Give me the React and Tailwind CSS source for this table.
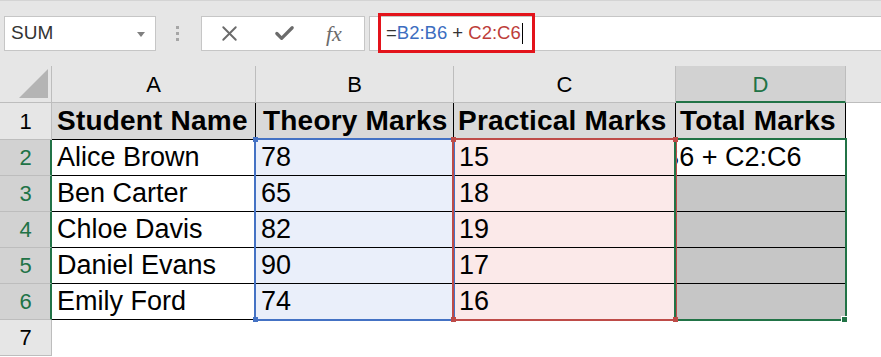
import { X, Check } from 'lucide-react'

const ROWS = [
  ['Alice Brown', '78', '15'],
  ['Ben Carter', '65', '18'],
  ['Chloe Davis', '82', '19'],
  ['Daniel Evans', '90', '17'],
  ['Emily Ford', '74', '16'],
]

const COLS = [
  { key: 'A', w: 'w-[204px]' },
  { key: 'B', w: 'w-[198px]' },
  { key: 'C', w: 'w-[222px]' },
  { key: 'D', w: 'w-[170px]' },
]

function Toolbar() {
  return (
    <div className="relative flex h-[66px] items-start gap-0 border-t border-[#d4d4d4] bg-[#e6e6e6] pt-[15px]">
      {/* name box */}
      <div className="ml-[4px] flex h-[35px] w-[152px] items-center justify-between border border-[#c6c6c6] bg-white pl-[6px] pr-[10px]">
        <span className="text-[19px] text-[#333]">SUM</span>
        <svg width="8" height="5" viewBox="0 0 8 5" className="mt-[1px]">
          <path d="M0 0h8L4 5z" fill="#808080" />
        </svg>
      </div>

      {/* grip dots */}
      <div className="ml-[18px] flex h-[35px] w-[6px] flex-col items-center justify-center gap-[3px]">
        <span className="h-[3px] w-[3px] bg-[#a6a6a6]" />
        <span className="h-[3px] w-[3px] bg-[#a6a6a6]" />
        <span className="h-[3px] w-[3px] bg-[#a6a6a6]" />
      </div>

      {/* cancel / enter / fx */}
      <div className="ml-[21px] flex h-[35px] w-[164px] items-center border border-[#c6c6c6] bg-white text-[#6b6b6b]">
        <X size={25} strokeWidth={1.8} className="ml-[15px]" />
        <Check size={23} strokeWidth={3.4} className="ml-[31px]" />
        <span
          className="ml-[30px] text-[22px] italic text-[#6b6b6b]"
          style={{ fontFamily: '"Liberation Serif", serif' }}
        >
          fx
        </span>
      </div>

      {/* formula bar */}
      <div className="relative ml-[4px] flex h-[35px] flex-1 items-center border border-r-0 border-[#c6c6c6] bg-white pl-[16px]">
        <span className="text-[18.5px] leading-none text-[#333]">
          =<span className="text-[#3c6dc0]">B2:B6</span> + <span className="text-[#bd3d3a]">C2:C6</span>
        </span>
        <span className="ml-[1px] h-[21px] w-px bg-black" />
        {/* annotation highlight */}
        <div className="pointer-events-none absolute left-[8px] top-[-4px] h-[40px] w-[157px] border-[3px] border-[#e3131b]" />
      </div>
    </div>
  )
}

function HeaderRow() {
  return (
    <div className="flex h-[37px]">
      <div className="flex w-[52px] items-end justify-end border-r border-b border-[#bdbdbd] bg-[#e6e6e6] pb-[4px] pr-[3px]">
        <svg width="29" height="29" viewBox="0 0 29 29">
          <path d="M29 0V29H0z" fill="#b4b4b4" />
        </svg>
      </div>
      {COLS.map((c) =>
        c.key === 'D' ? (
          <div
            key={c.key}
            className={`${c.w} flex items-center justify-center border-r border-b-2 border-r-[#bdbdbd] border-b-[#217346] bg-[#d2d2d2] pt-[1px] text-[22px] text-[#217346]`}
          >
            {c.key}
          </div>
        ) : (
          <div
            key={c.key}
            className={`${c.w} flex items-center justify-center border-r border-b border-[#bdbdbd] bg-[#e6e6e6] pt-[1px] text-[22px] text-black`}
          >
            {c.key}
          </div>
        )
      )}
      <div className="flex-1 border-b border-[#bdbdbd] bg-[#e6e6e6]" />
    </div>
  )
}

function RowHead({ n, active, h }) {
  return (
    <div
      className={`flex w-[52px] items-center justify-center border-b border-[#bdbdbd] text-[22px] ${h} ${
        active
          ? 'border-r-2 border-r-[#217346] bg-[#d2d2d2] pl-[1px] text-[#217346]'
          : 'border-r border-r-[#bdbdbd] bg-[#e6e6e6] text-black'
      }`}
    >
      {n}
    </div>
  )
}

export default function App() {
  return (
    <div
      className="h-[357px] w-[881px] overflow-hidden bg-white"
      style={{ fontFamily: '"Liberation Sans", Arial, sans-serif' }}
    >
      <Toolbar />

      <div className="relative">
        <HeaderRow />

        {/* row 1 – titles */}
        <div className="flex h-[37px]">
          <RowHead n={1} h="h-[37px]" />
          <div className="flex w-[204px] items-center border-r border-b border-r-black border-b-black bg-[#d9d9d9] pl-[5px] text-[28px] font-bold leading-none tracking-[0.2px] text-black">
            Student Name
          </div>
          <div className="flex w-[198px] items-center border-r border-b border-black bg-[#d9d9d9] pl-[7px] text-[28px] font-bold leading-none tracking-[0.2px] text-black">
            Theory Marks
          </div>
          <div className="flex w-[222px] items-center border-r border-b border-black bg-[#d9d9d9] pl-[4px] text-[28px] font-bold leading-none tracking-[0.2px] text-black">
            Practical Marks
          </div>
          <div className="flex w-[170px] items-center border-r border-b border-black bg-[#d9d9d9] pl-[4px] text-[28px] font-bold leading-none tracking-[0.2px] text-black">
            Total Marks
          </div>
          <div className="flex-1" />
        </div>

        {/* rows 2-6 */}
        {ROWS.map(([name, theory, practical], i) => (
          <div key={name} className="flex h-[36px]">
            <RowHead n={i + 2} active h="h-[36px]" />
            <div className="flex w-[204px] items-center border-r border-b border-black bg-white pl-[5px] text-[27px] leading-none text-black">
              {name}
            </div>
            <div className="flex w-[198px] items-center border-r border-b border-black bg-[#eaeffa] pl-[5px] text-[27px] leading-none text-black">
              {theory}
            </div>
            <div className="flex w-[222px] items-center border-r border-b border-black bg-[#fbe9e9] pl-[5px] text-[27px] leading-none text-black">
              {practical}
            </div>
            {i === 0 ? (
              <div className="flex w-[170px] items-center overflow-hidden whitespace-nowrap border-r border-b border-black bg-white text-[27px] leading-none text-black">
                <span className="ml-[-71px]">=B2:B6 + C2:C6</span>
              </div>
            ) : (
              <div className="w-[170px] border-r border-b border-black bg-[#c6c6c6]" />
            )}
            <div className="flex-1" />
          </div>
        ))}

        {/* row 7 */}
        <div className="flex h-[36px]">
          <RowHead n={7} h="h-[36px]" />
          <div className="flex-1" />
        </div>

        {/* range highlights */}
        <div className="pointer-events-none absolute left-[254px] top-[72px] h-[183px] w-[201px] border-2 border-[#4472c4]" />
        <div className="pointer-events-none absolute left-[452px] top-[72px] h-[183px] w-[225px] border-2 border-[#be4b48]" />
        <div className="pointer-events-none absolute left-[674px] top-[72px] h-[183px] w-[173px] border-2 border-[#217346]" />

        <span className="absolute left-[253px] top-[71px] h-[5px] w-[5px] bg-[#4472c4]" />
        <span className="absolute left-[253px] top-[251px] h-[5px] w-[5px] bg-[#4472c4]" />
        <span className="absolute left-[451px] top-[71px] h-[5px] w-[5px] bg-[#be4b48]" />
        <span className="absolute left-[451px] top-[251px] h-[5px] w-[5px] bg-[#be4b48]" />
        <span className="absolute left-[673px] top-[71px] h-[5px] w-[5px] bg-[#be4b48]" />
        <span className="absolute left-[673px] top-[251px] h-[5px] w-[5px] bg-[#be4b48]" />
        <span className="absolute left-[841px] top-[250px] h-[7px] w-[7px] border border-white bg-[#217346]" />
      </div>
    </div>
  )
}
